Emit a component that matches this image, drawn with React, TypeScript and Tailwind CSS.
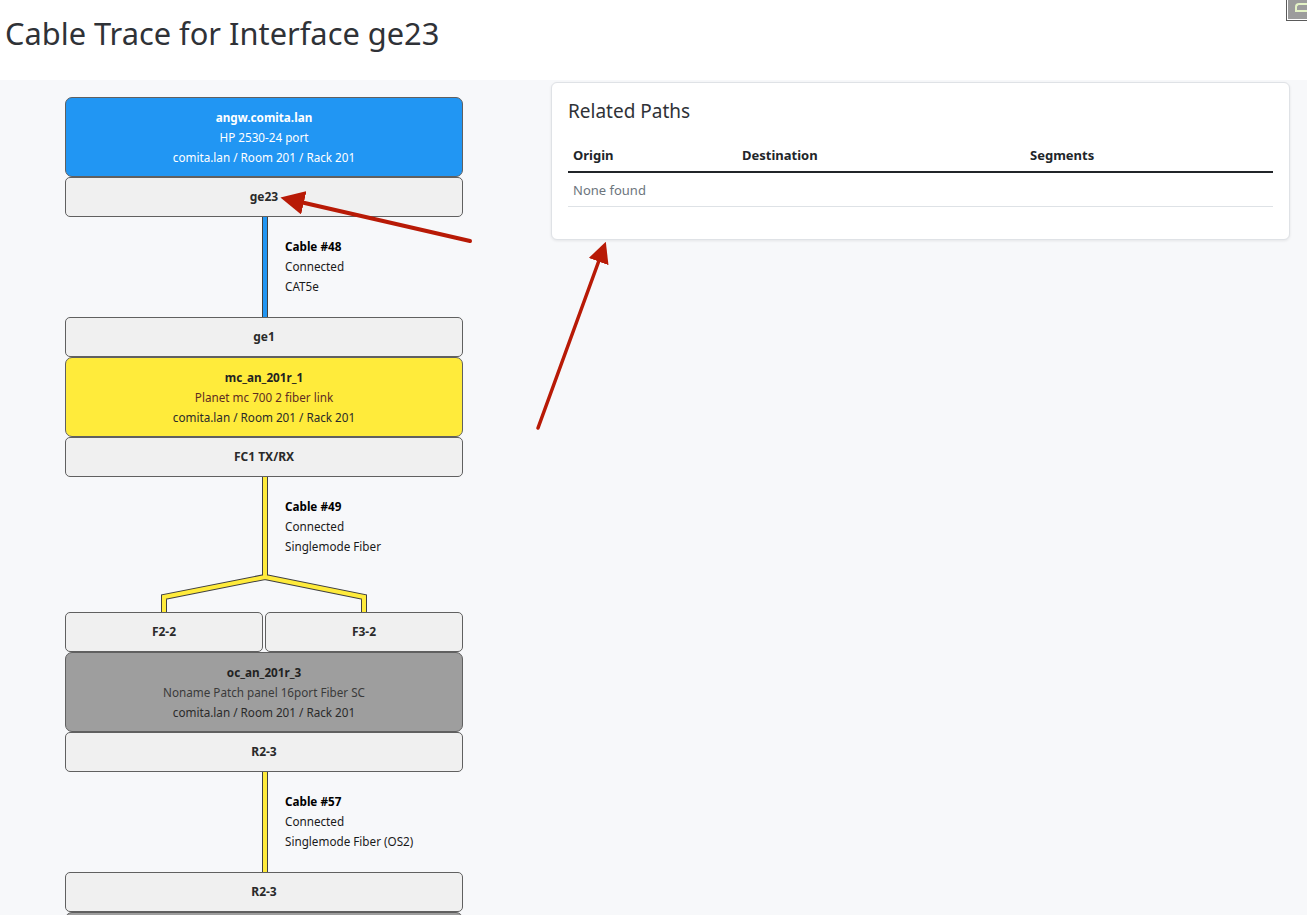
import React from "react";

const FONT = { fontFamily: '"Segoe UI", "Noto Sans", "Open Sans", sans-serif' };

function Device({ name, type, site, tone }: { name: string; type: string; site: string; tone: "blue" | "yellow" | "gray" }) {
  const bg = tone === "blue" ? "bg-[#2196f3]" : tone === "yellow" ? "bg-[#ffeb3b]" : "bg-[#9e9e9e]";
  const nameC = tone === "blue" ? "text-white" : "text-[#222]";
  const typeC = tone === "blue" ? "text-white" : tone === "yellow" ? "text-[#5e2c22]" : "text-[#3a3a3a]";
  const siteC = tone === "blue" ? "text-white" : "text-[#2a2a2a]";
  return (
    <div className={`h-[80px] rounded-[7px] border border-[#606060] ${bg} flex flex-col items-center justify-center text-[11.7px] leading-[20px] pb-[1px]`}>
      <div className={`font-bold ${nameC}`}>{name}</div>
      <div className={typeC}>{type}</div>
      <div className={siteC}>{site}</div>
    </div>
  );
}

function Iface({ label, className = "" }: { label: string; className?: string }) {
  return (
    <div className={`h-[40px] rounded-[5px] border border-[#606060] bg-[#f0f0f0] flex items-center justify-center text-[12px] font-bold text-[#2a2a2a] ${className}`}>
      {label}
    </div>
  );
}

function CableLabel({ n, type }: { n: string; type: string }) {
  return (
    <div className="pl-[220px] pt-[19px] text-[11.7px] leading-[20px] text-[#1a1a1a]">
      <div className="font-bold text-black">Cable #{n}</div>
      <div>Connected</div>
      <div>{type}</div>
    </div>
  );
}

function Cable({ n, type, color }: { n: string; type: string; color: string }) {
  return (
    <div className="relative h-[100px]">
      <svg className="absolute left-0 top-0" width="398" height="100">
        <line x1="200" y1="0" x2="200" y2="100" stroke="#404040" strokeWidth="6" />
        <line x1="200" y1="0" x2="200" y2="100" stroke={color} strokeWidth="4" />
      </svg>
      <div className="relative">
        <CableLabel n={n} type={type} />
      </div>
    </div>
  );
}

function ForkCable({ n, type, color }: { n: string; type: string; color: string }) {
  const d = "M200 0 L200 100 L99 120 L99 136 M200 100 L299 120 L299 136";
  return (
    <div className="relative h-[135px]">
      <svg className="absolute left-0 top-0" width="398" height="135">
        <path d={d} fill="none" stroke="#404040" strokeWidth="6" strokeLinejoin="miter" />
        <path d={d} fill="none" stroke={color} strokeWidth="4" strokeLinejoin="miter" />
      </svg>
      <div className="relative">
        <CableLabel n={n} type={type} />
      </div>
    </div>
  );
}

export default function App() {
  return (
    <div className="relative w-[1307px] h-[915px] overflow-hidden bg-white" style={FONT}>
      <div className="h-[80px] bg-white flex items-center pl-[5px]">
        <h1 className="text-[30.8px] leading-none font-normal text-[#2f3237] -mt-[14px]">Cable Trace for Interface ge23</h1>
      </div>
      <div className="absolute right-0 top-0 w-[21px] h-[21px] border border-t-0 border-r-0 border-[#5a5a5a] bg-white pl-[1px] pb-[1px]">
        <div className="w-full h-full bg-[#9c9c9c] pt-[3px] pl-[7px]">
          <div className="w-[12px] h-[9px] border-2 border-r-0 border-[#e4f3c6] rounded-tl-[4px]" />
        </div>
      </div>
      <div className="bg-[#f7f8fa] h-[835px] flex items-start">
        <div className="w-[398px] ml-[65px] mt-[17px] flex flex-col shrink-0">
          <Device name="angw.comita.lan" type="HP 2530-24 port" site="comita.lan / Room 201 / Rack 201" tone="blue" />
          <Iface label="ge23" />
          <Cable n="48" type="CAT5e" color="#2196f3" />
          <Iface label="ge1" />
          <Device name="mc_an_201r_1" type="Planet mc 700 2 fiber link" site="comita.lan / Room 201 / Rack 201" tone="yellow" />
          <Iface label="FC1 TX/RX" />
          <ForkCable n="49" type="Singlemode Fiber" color="#ffeb3b" />
          <div className="flex gap-[2px]">
            <Iface label="F2-2" className="flex-1" />
            <Iface label="F3-2" className="flex-1" />
          </div>
          <Device name="oc_an_201r_3" type="Noname Patch panel 16port Fiber SC" site="comita.lan / Room 201 / Rack 201" tone="gray" />
          <Iface label="R2-3" />
          <Cable n="57" type="Singlemode Fiber (OS2)" color="#ffeb3b" />
          <Iface label="R2-3" />
          <div className="h-[80px] rounded-[7px] border border-[#606060] bg-[#9e9e9e]" />
        </div>
        <div className="ml-[88px] mt-[2px] w-[739px] bg-white border border-[#dfe2e6] rounded-[6px] shadow-[0_1px_3px_rgba(0,0,0,0.08)] px-[16px] pt-[17px] pb-[32px]">
          <h2 className="text-[19px] leading-[24px] text-[#2f3237] font-normal -mt-[1px]">Related Paths</h2>
          <table className="mt-[16px] w-full text-[13px] border-collapse">
            <thead>
              <tr className="border-b-2 border-[#212529]">
                <th className="w-[169px] text-left font-bold text-[#212529] px-[5px] pt-[7px] pb-[5px]">Origin</th>
                <th className="w-[288px] text-left font-bold text-[#212529] px-[5px] pt-[7px] pb-[5px]">Destination</th>
                <th className="text-left font-bold text-[#212529] px-[5px] pt-[7px] pb-[5px]">Segments</th>
              </tr>
            </thead>
            <tbody>
              <tr className="border-b border-[#dee2e6]">
                <td colSpan={3} className="text-[#6c757d] px-[5px] pt-[8px] pb-[6px]">None found</td>
              </tr>
            </tbody>
          </table>
        </div>
      </div>
      <svg className="absolute left-0 top-0 pointer-events-none" width="1307" height="915">
        <defs>
          <marker id="ah" markerWidth="6" markerHeight="6" refX="2" refY="3" orient="auto" markerUnits="strokeWidth">
            <path d="M0 0 L6 3 L0 6 Z" fill="#b81a06" />
          </marker>
        </defs>
        <line x1="470" y1="241" x2="296" y2="201" stroke="#b81a06" strokeWidth="4" strokeLinecap="round" markerEnd="url(#ah)" />
        <line x1="538" y1="428" x2="601" y2="255" stroke="#b81a06" strokeWidth="3.5" strokeLinecap="round" markerEnd="url(#ah)" />
      </svg>
    </div>
  );
}
